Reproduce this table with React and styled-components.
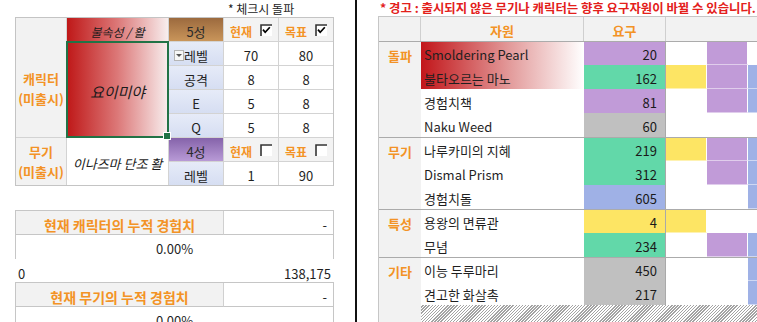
import React from 'react';
import styled, { createGlobalStyle } from 'styled-components';

const GlobalStyle = createGlobalStyle`
  html, body { margin: 0; padding: 0; background: #fff; }
  body {
    font-family: "Noto Sans CJK KR", "Noto Sans", sans-serif;
    font-size: 13px;
    color: #1f1f1f;
  }
  * { box-sizing: border-box; }
`;

const ORANGE = '#f39326';

const TONES = {
  purple: '#c19bd8',
  green: '#62d8a9',
  grey: '#c0c0c0',
  blue: '#9fb1e6',
  yellow: '#fde564',
};

const Page = styled.div`
  display: flex;
  width: 757px;
  height: 322px;
  overflow: hidden;
`;

/* ---------- left side ---------- */

const LeftPanel = styled.div`
  width: 355px;
  flex-shrink: 0;
  padding-left: 15px;
  display: flex;
  flex-direction: column;
`;

const Caption = styled.div`
  height: 19px;
  line-height: 17px;
  font-size: 12px;
  padding-left: 213px;
  color: #222;
`;

const Sheet = styled.div`
  display: grid;
  grid-template-columns: 50px 101px 54px 54px 54px;
  grid-template-rows: repeat(7, 23px);
  gap: 1px;
  width: 319px;
  background: #d3d3d3;
  border: 1px solid #c4c4c4;
`;

const SideLabel = styled.div`
  grid-row: span ${p => p.$rows};
  display: flex;
  flex-direction: column;
  align-items: center;
  justify-content: center;
  padding-top: ${p => p.$shift || 0}px;
  background: #f2f2f2;
  color: ${ORANGE};
  font-weight: 700;
  font-size: 13px;
  line-height: 20px;
`;

const NameCell = styled.div`
  grid-row: span ${p => p.$rows || 1};
  position: relative;
  display: flex;
  align-items: center;
  justify-content: center;
  padding-top: 3px;
  font-style: italic;
  font-size: ${p => p.$size || 13}px;
  color: #1a1a1a;
  background: ${p => (p.$red ? 'linear-gradient(90deg, #bf1818 0%, #dc7878 50%, #f8eeee 100%)' : '#fff')};
  ${p => p.$selected && `
    z-index: 1;
    box-shadow: 0 0 0 1px #217346, inset 0 0 0 1px #217346;
    &::after {
      content: '';
      position: absolute;
      right: -3px;
      bottom: -3px;
      width: 6px;
      height: 6px;
      background: #217346;
      border: 1px solid #fff;
    }
  `}
`;

const GradeCell = styled.div`
  display: flex;
  align-items: center;
  justify-content: center;
  padding-top: 4px;
  font-size: 13px;
  color: #2a2a2a;
  background: ${p => (p.$grade === 5
    ? 'linear-gradient(180deg, #9c6a3e 0%, #c9955a 100%)'
    : 'linear-gradient(180deg, #8563aa 0%, #b89ad6 100%)')};
`;

const StatLabel = styled.div`
  position: relative;
  display: flex;
  align-items: center;
  justify-content: center;
  padding-top: 4px;
  font-size: 13px;
  color: #222;
  background: linear-gradient(180deg, #e6ebf8 0%, #d6def2 100%);
`;

const DropButton = styled.span`
  position: absolute;
  left: 5px;
  top: 8px;
  width: 10px;
  height: 11px;
  border: 1px solid #b5b5b5;
  background: #f7f7f7;
  display: flex;
  align-items: center;
  justify-content: center;
  &::after {
    content: '';
    border-left: 3px solid transparent;
    border-right: 3px solid transparent;
    border-top: 3px solid #555;
  }
`;

const CheckHead = styled.div`
  display: flex;
  align-items: center;
  justify-content: center;
  gap: 8px;
  background: #f3f3f3;
  color: ${ORANGE};
  font-weight: 700;
  font-size: 12px;
  & > span { padding-top: 3px; }
`;

const Value = styled.div`
  display: flex;
  align-items: center;
  justify-content: center;
  padding-top: 4px;
  background: #fff;
  font-size: 13px;
  color: #1f1f1f;
`;

const ExpTable = styled.div`
  display: grid;
  grid-template-columns: 208px 109px;
  width: 319px;
  border: 1px solid #c6c6c6;
  border-bottom: none;
  margin-top: ${p => p.$gap || 0}px;
`;

const ExpTitle = styled.div`
  height: 24px;
  display: flex;
  align-items: center;
  justify-content: center;
  padding-top: 4px;
  background: #f2f2f2;
  border-right: 1px solid #d0d0d0;
  border-bottom: 1px solid #c6c6c6;
  color: ${ORANGE};
  font-weight: 700;
  font-size: 14px;
`;

const ExpValue = styled.div`
  height: 24px;
  display: flex;
  align-items: center;
  justify-content: flex-end;
  padding: 4px 6px 0 0;
  border-bottom: 1px solid #c6c6c6;
  font-size: 13px;
`;

const ExpBar = styled.div`
  grid-column: span 2;
  height: 24px;
  display: flex;
  align-items: center;
  justify-content: center;
  padding-top: 2px;
  font-size: 13px;
`;

const RangeRow = styled.div`
  width: 319px;
  height: 23px;
  display: flex;
  align-items: center;
  justify-content: space-between;
  padding: 6px 3px 0;
  font-size: 13px;
`;

/* ---------- right side ---------- */

const RightPanel = styled.div`
  flex: 1;
  min-width: 0;
  border-left: 2px solid #111;
  padding-left: 21px;
  display: flex;
  flex-direction: column;
  overflow: hidden;
`;

const Warning = styled.div`
  height: 19px;
  line-height: 16px;
  padding-left: 2px;
  white-space: nowrap;
  color: #e3201b;
  font-weight: 700;
  font-size: 12.4px;
`;

const ResTable = styled.div`
  width: 440px;
  border-top: 1px solid #c6c6c6;
  border-left: 1px solid #c6c6c6;
  display: flex;
  flex-direction: column;
`;

const HeadRow = styled.div`
  height: 24px;
  display: grid;
  grid-template-columns: 42px 163px 82px 1fr;
  background: #f2f2f2;
`;

const HeadCell = styled.div`
  display: flex;
  align-items: center;
  justify-content: center;
  padding-top: 2px;
  border-right: ${p => (p.$open ? 'none' : '1px solid #cfcfcf')};
  color: ${ORANGE};
  font-weight: 700;
  font-size: 13px;
`;

const Group = styled.div`
  display: flex;
  border-top: 1px solid #ababab;
`;

const Category = styled.div`
  width: 42px;
  flex-shrink: 0;
  padding-top: 2px;
  background: #f2f2f2;
  color: ${ORANGE};
  font-weight: 700;
  font-size: 13px;
  text-align: center;
  line-height: 23px;
`;

const Rows = styled.div`
  flex: 1;
  display: flex;
  flex-direction: column;
`;

const ResRow = styled.div`
  height: 24px;
  display: grid;
  grid-template-columns: 163px 82px 41px 41px 41px 1fr;
  &:first-child { height: 23px; }
`;

const ResName = styled.div`
  display: flex;
  align-items: center;
  padding: 2px 0 0 3px;
  font-size: 13px;
  color: #1f1f1f;
  white-space: nowrap;
  background: ${p => (p.$hot ? 'linear-gradient(90deg, #c2161a 0%, #e39c9c 55%, #ffffff 100%)' : '#fff')};
`;

const Need = styled.div`
  display: flex;
  align-items: center;
  justify-content: flex-end;
  padding: 2px 8px 0 0;
  font-size: 13px;
  color: #1a1a1a;
  background: ${p => TONES[p.$tone]};
  border-right: 1px solid #a9a9a9;
`;

const Mark = styled.div`
  background: ${p => (p.$tone ? TONES[p.$tone] : '#fff')};
  border-right: 1px solid #fff;
  border-bottom: 1px solid rgba(255, 255, 255, 0.5);
`;

const HatchRow = styled.div`
  display: flex;
  height: 20px;
`;

const Hatch = styled.div`
  flex: 1;
  background: repeating-linear-gradient(135deg, #ffffff 0 1.2px, #a3a3a3 1.2px 2.2px);
`;

function Checkbox({ checked }) {
  return (
    <svg width="12" height="12" viewBox="0 0 12 12">
      <rect x="0" y="0" width="12" height="12" fill="#fff" />
      <path d="M1 12 V1 H12" fill="none" stroke="#333" strokeWidth="1.6" />
      {checked && (
        <path d="M3 5.6 L5.2 8.3 L9.8 3.2" fill="none" stroke="#000" strokeWidth="1.7" />
      )}
    </svg>
  );
}

const stats = [
  ['레벨', 70, 80],
  ['공격', 8, 8],
  ['E', 5, 8],
  ['Q', 5, 8],
];

const groups = [
  {
    label: '돌파',
    rows: [
      { name: 'Smoldering Pearl', hot: true, need: 20, tone: 'purple', marks: [null, 'purple', null] },
      { name: '불타오르는 마노', hot: true, need: 162, tone: 'green', marks: ['yellow', 'purple', 'blue'] },
      { name: '경험치책', need: 81, tone: 'purple', marks: [null, 'purple', 'blue'] },
      { name: 'Naku Weed', need: 60, tone: 'grey', marks: [null, null, null] },
    ],
  },
  {
    label: '무기',
    rows: [
      { name: '나루카미의 지혜', need: 219, tone: 'green', marks: ['yellow', 'purple', 'blue'] },
      { name: 'Dismal Prism', need: 312, tone: 'green', marks: [null, 'purple', 'blue'] },
      { name: '경험치돌', need: 605, tone: 'blue', marks: [null, null, 'blue'] },
    ],
  },
  {
    label: '특성',
    rows: [
      { name: '용왕의 면류관', need: 4, tone: 'yellow', marks: ['yellow', null, null] },
      { name: '무념', need: 234, tone: 'green', marks: [null, 'purple', 'blue'] },
    ],
  },
  {
    label: '기타',
    rows: [
      { name: '이능 두루마리', need: 450, tone: 'grey', marks: [null, null, 'blue'] },
      { name: '견고한 화살촉', need: 217, tone: 'grey', marks: [null, null, 'blue'] },
    ],
  },
];

export default function App() {
  return (
    <Page>
      <GlobalStyle />
      <LeftPanel>
        <Caption>* 체크시 돌파</Caption>
        <Sheet>
          <SideLabel $rows={5} $shift={23}>
            <span>캐릭터</span>
            <span>(미출시)</span>
          </SideLabel>
          <NameCell $red $size={12}>불속성 / 활</NameCell>
          <GradeCell $grade={5}>5성</GradeCell>
          <CheckHead><span>현재</span><Checkbox checked /></CheckHead>
          <CheckHead><span>목표</span><Checkbox checked /></CheckHead>

          <NameCell $red $rows={4} $size={15} $selected>요이미야</NameCell>
          {stats.map(([label, now, goal], i) => (
            <React.Fragment key={label}>
              <StatLabel>
                {i === 0 && <DropButton />}
                {label}
              </StatLabel>
              <Value>{now}</Value>
              <Value>{goal}</Value>
            </React.Fragment>
          ))}

          <SideLabel $rows={2}>
            <span>무기</span>
            <span>(미출시)</span>
          </SideLabel>
          <NameCell $rows={2}>이나즈마 단조 활</NameCell>
          <GradeCell $grade={4}>4성</GradeCell>
          <CheckHead><span>현재</span><Checkbox /></CheckHead>
          <CheckHead><span>목표</span><Checkbox /></CheckHead>
          <StatLabel>레벨</StatLabel>
          <Value>1</Value>
          <Value>90</Value>
        </Sheet>

        <ExpTable $gap={24}>
          <ExpTitle>현재 캐릭터의 누적 경험치</ExpTitle>
          <ExpValue>-</ExpValue>
          <ExpBar>0.00%</ExpBar>
        </ExpTable>
        <RangeRow>
          <span>0</span>
          <span>138,175</span>
        </RangeRow>
        <ExpTable>
          <ExpTitle>현재 무기의 누적 경험치</ExpTitle>
          <ExpValue>-</ExpValue>
          <ExpBar>0.00%</ExpBar>
        </ExpTable>
      </LeftPanel>

      <RightPanel>
        <Warning>* 경고 : 출시되지 않은 무기나 캐릭터는 향후 요구자원이 바뀔 수 있습니다.</Warning>
        <ResTable>
          <HeadRow>
            <HeadCell />
            <HeadCell>자원</HeadCell>
            <HeadCell>요구</HeadCell>
            <HeadCell $open />
          </HeadRow>
          {groups.map(g => (
            <Group key={g.label}>
              <Category>{g.label}</Category>
              <Rows>
                {g.rows.map(r => (
                  <ResRow key={r.name}>
                    <ResName $hot={r.hot}>{r.name}</ResName>
                    <Need $tone={r.tone}>{r.need}</Need>
                    {r.marks.map((m, i) => (
                      <Mark key={i} $tone={m} />
                    ))}
                    <Mark />
                  </ResRow>
                ))}
              </Rows>
            </Group>
          ))}
          <HatchRow>
            <Category />
            <Hatch />
          </HatchRow>
        </ResTable>
      </RightPanel>
    </Page>
  );
}
